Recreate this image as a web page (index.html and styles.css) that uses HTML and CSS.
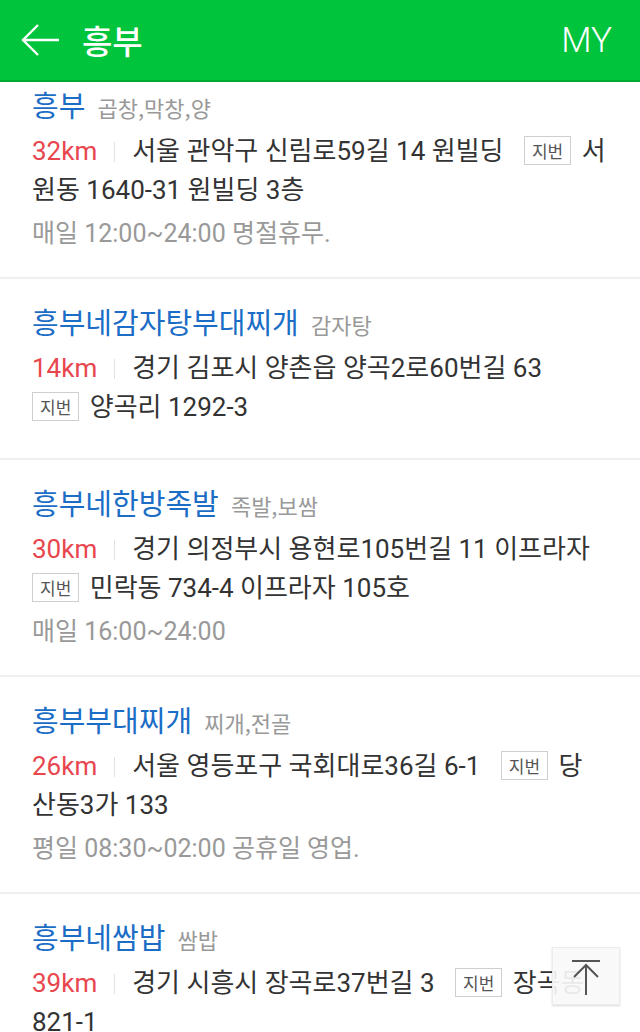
FILE: index.html
```html
<!DOCTYPE html>
<html lang="ko">
<head>
  <meta charset="UTF-8" />
  <meta name="viewport" content="width=device-width, initial-scale=1.0" />
  <title>흥부 검색</title>
  <link rel="stylesheet" href="styles.css">
</head>
<body>
  <header class="topbar">
    <div class="topbar-left">
      <a href="#" class="back">
        <svg width="40" height="40" viewBox="0 0 40 40">
          <path d="M39 20 H3 M18 5 L3 20 L18 35" fill="none" stroke="#fff" stroke-width="2.4" />
        </svg>
      </a>
      <h1>흥부</h1>
    </div>
    <a href="#" class="my">MY</a>
  </header>

  <!-- 검색 결과 -->
  <ul class="results">
    <li class="place first">
      <div class="name">흥부 <span class="cat">곱창,막창,양</span></div>
      <div class="addr">
        <span class="dist">32km</span><span class="bar"></span><span class="road">서울 관악구 신림로59길 14 원빌딩</span> <span class="jibun">지번</span> 서원동 1640-31 원빌딩 3층
      </div>
      <div class="hours">매일 12:00~24:00 명절휴무.</div>
    </li>
    <li class="place">
      <div class="name">흥부네감자탕부대찌개 <span class="cat">감자탕</span></div>
      <div class="addr">
        <span class="dist">14km</span><span class="bar"></span><span class="road">경기 김포시 양촌읍 양곡2로60번길 63</span> <span class="jibun">지번</span> 양곡리 1292-3
      </div>
    </li>
    <li class="place">
      <div class="name">흥부네한방족발 <span class="cat">족발,보쌈</span></div>
      <div class="addr">
        <span class="dist">30km</span><span class="bar"></span><span class="road">경기 의정부시 용현로105번길 11 이프라자</span> <span class="jibun">지번</span> 민락동 734-4 이프라자 105호
      </div>
      <div class="hours">매일 16:00~24:00</div>
    </li>
    <li class="place">
      <div class="name">흥부부대찌개 <span class="cat">찌개,전골</span></div>
      <div class="addr">
        <span class="dist">26km</span><span class="bar"></span><span class="road">서울 영등포구 국회대로36길 6-1</span> <span class="jibun">지번</span> 당<br>산동3가 133
      </div>
      <div class="hours">평일 08:30~02:00 공휴일 영업.</div>
    </li>
    <li class="place">
      <div class="name">흥부네쌈밥 <span class="cat">쌈밥</span></div>
      <div class="addr">
        <span class="dist">39km</span><span class="bar"></span><span class="road">경기 시흥시 장곡로37번길 3</span> <span class="jibun">지번</span> 장곡동 821-1
      </div>
    </li>
  </ul>

  <a href="#" class="to-top">
    <svg width="40" height="40" viewBox="0 0 40 40">
      <path d="M6 5 H34 M20 9 V39 M8 21 L20 9 L32 21" fill="none" stroke="#555" stroke-width="2" />
    </svg>
  </a>
</body>
</html>
```

FILE: styles.css
```css
body {
  font-family: Roboto, "Noto Sans CJK KR", sans-serif;
  margin: 0;
  background-color: #fff;
  color: #333;
  height: 1032px;
  overflow: hidden;
  position: relative;
}
a {
  text-decoration: none;
}
.topbar {
  background-color: #00c43c;
  border-bottom: 2px solid #00a934;
  height: 80px;
  padding: 0 28px 0 20px;
  display: flex;
  align-items: center;
  justify-content: space-between;
}
.topbar-left {
  display: flex;
  align-items: center;
  gap: 22px;
}
.back {
  display: flex;
}
.topbar h1 {
  margin: 0;
  color: white;
  font-size: 33px;
  font-weight: 500;
  font-family: "Noto Sans CJK KR", sans-serif;
}
.my {
  color: white;
  font-size: 35px;
  font-weight: 300;
}
.results {
  list-style: none;
  margin: 0;
  padding: 0;
}
.place {
  padding: 22px 32px 25px;
  border-bottom: 2px solid #f0f0f0;
}
.place.first {
  padding-top: 2px;
}
.name {
  font-size: 29px;
  line-height: 40px;
  color: #1b6dc6;
  margin-bottom: 5px;
  font-family: "Noto Sans CJK KR", sans-serif;
}
.cat {
  font-size: 22px;
  color: #999;
  margin-left: 4px;
}
.addr {
  font-size: 26px;
  line-height: 39px;
  margin-bottom: 6px;
}
.dist {
  color: #e8464e;
}
.bar {
  display: inline-block;
  width: 1px;
  height: 20px;
  background-color: #e2e2e2;
  margin: 0 17px;
  vertical-align: -2px;
}
.road {
  padding-right: 14px;
}
.jibun {
  display: inline-block;
  font-size: 17px;
  line-height: 27px;
  color: #555;
  border: 1px solid #cfcfcf;
  padding: 0 7px;
  margin-right: 4px;
  vertical-align: 2px;
  font-family: "Noto Sans CJK KR", sans-serif;
}
.hours {
  font-size: 25px;
  line-height: 36px;
  color: #999;
  margin-top: 2px;
}
.to-top {
  position: absolute;
  right: 20px;
  bottom: 27px;
  width: 66px;
  height: 56px;
  background-color: rgba(248, 248, 248, 0.92);
  border: 1px solid #ececec;
  box-shadow: 0 1px 2px rgba(0, 0, 0, 0.15);
  display: flex;
  align-items: center;
  justify-content: center;
}
```
